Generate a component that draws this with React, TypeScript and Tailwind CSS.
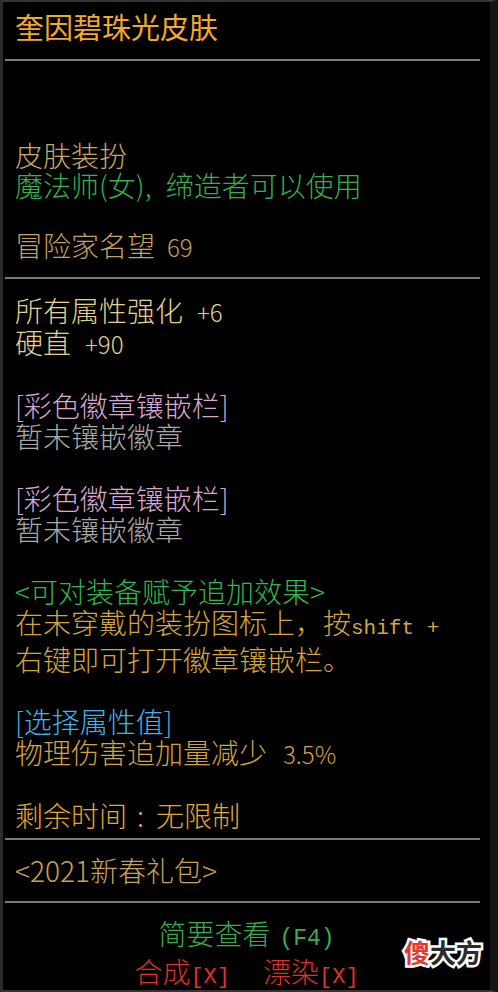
export default function App() {
  const sep = <div className="h-[2px] w-[475px] ml-[2px] bg-[#7a7a7a] shrink-0" />;
  const mono = "font-['Liberation_Mono','DejaVu_Sans_Mono',monospace]";
  return (
    <div className="w-[498px] h-[992px] bg-black relative overflow-hidden font-['Noto_Sans_CJK_SC','Noto_Sans',sans-serif] font-light">
      <div className="h-full border-t-2 border-l-[3px] border-b-2 border-r-[8px] border-t-[#353535] border-l-[#2a2a2a] border-b-[#353535] border-r-[#141414] flex flex-col">
        {/* title */}
        <div className="h-[57px] pt-[9px] pl-[12px] shrink-0">
          <div className="text-[29px] leading-[31px] text-[#f2a82a] font-normal">奎因碧珠光皮肤</div>
        </div>
        {sep}
        {/* section 1 */}
        <div className="h-[216px] pt-[79px] pl-[12px] text-[28px] leading-[30px] shrink-0">
          <div className="text-[#c8a866]">皮肤装扮</div>
          <div className="text-[#33b24c]">
            魔法师(女),<span className="ml-[14px]">缔造者可以使用</span>
          </div>
          <div className="h-[30px]" />
          <div className="text-[#c4a260]">
            冒险家名望<span className="ml-[12px] text-[24px]">69</span>
          </div>
        </div>
        {sep}
        {/* section 2 */}
        <div className="h-[559px] pt-[16px] pl-[12px] text-[28px] leading-[31px] shrink-0">
          <div className="text-[#e4d28c]">
            所有属性强化<span className="ml-[14px] text-[24px]">+6</span>
          </div>
          <div className="text-[#e4d28c]">
            硬直<span className="ml-[14px] text-[24px]">+90</span>
          </div>
          <div className="h-[31px]" />
          <div className="text-[#d8a6d4]">[彩色徽章镶嵌栏]</div>
          <div className="text-[#a8a8a8]">暂未镶嵌徽章</div>
          <div className="h-[31px]" />
          <div className="text-[#d8a6d4]">[彩色徽章镶嵌栏]</div>
          <div className="text-[#a8a8a8]">暂未镶嵌徽章</div>
          <div className="h-[31px]" />
          <div className="text-[#2fb84c]">&lt;可对装备赋予追加效果&gt;</div>
          <div className="text-[#d6a53c]">
            在未穿戴的装扮图标上，按<span className={`${mono} text-[21px]`}>shift +</span>
          </div>
          <div className="text-[#d6a53c]">右键即可打开徽章镶嵌栏。</div>
          <div className="h-[31px]" />
          <div className="text-[#3eb4ee]">[选择属性值]</div>
          <div className="text-[#d4a23e]">
            物理伤害追加量减少<span className="ml-[16px] text-[24px]">3.5%</span>
          </div>
          <div className="h-[31px]" />
          <div className="text-[#e2a832]">
            剩余时间<span className="ml-[10px]">:</span>
            <span className="ml-[12px]">无限制</span>
          </div>
        </div>
        {sep}
        {/* section 3 */}
        <div className="h-[61px] pt-[15px] pl-[12px] text-[28px] leading-[31px] shrink-0">
          <div className="text-[#c8a25a]">&lt;2021新春礼包&gt;</div>
        </div>
        {sep}
        {/* footer */}
        <div className="flex-1 pt-[14px] flex flex-col items-center text-[28px] leading-[32px]">
          <div className="text-[#3aae4e]">
            简要查看<span className={`${mono} text-[23px] ml-[9px]`}>(F4)</span>
          </div>
          <div className="text-[#e0302a] flex items-baseline">
            <span>合成</span>
            <span className={`${mono} text-[22px]`}>[X]</span>
            <span className="ml-[33px]">漂染</span>
            <span className={`${mono} text-[22px]`}>[X]</span>
          </div>
        </div>
      </div>
      {/* watermark */}
      <div className="absolute left-[404px] top-[936px] text-[26px] leading-[32px] font-bold [paint-order:stroke_fill] [-webkit-text-stroke:5px_#ffffff]">
        <span className="text-[#e2372c]">傻</span>
        <span className="text-[#2b2b2b]">大方</span>
      </div>
    </div>
  );
}
